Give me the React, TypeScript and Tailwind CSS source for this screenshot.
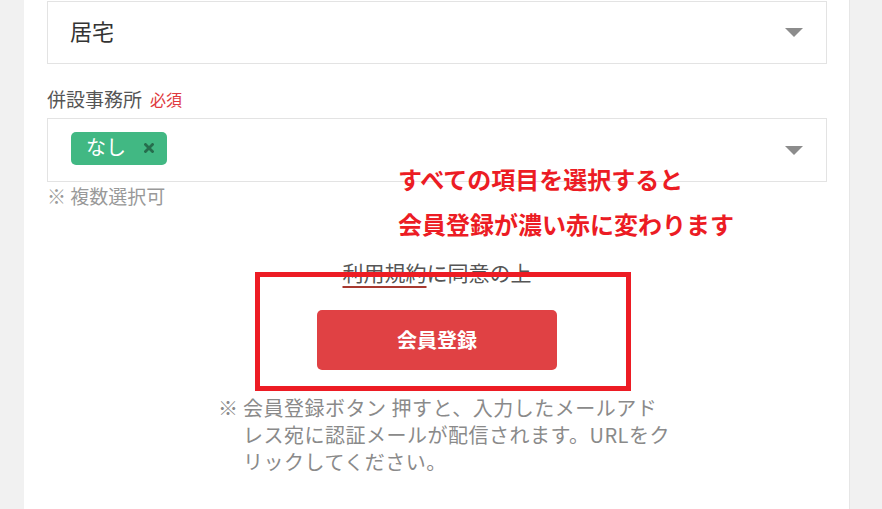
import React from "react";

const font = { fontFamily: '"Noto Sans CJK JP", "Noto Sans", sans-serif' };

function Caret() {
  return (
    <svg width="18" height="9" viewBox="0 0 18 9" className="shrink-0">
      <polygon points="0,0 18,0 9,9" fill="#8c8c8c" />
    </svg>
  );
}

export default function App() {
  return (
    <div className="flex w-[882px] h-[509px] bg-[#f1f1f1] overflow-hidden" style={font}>
      <div className="w-[24px] shrink-0" />

      {/* form panel */}
      <div className="relative w-[825px] shrink-0 bg-white px-[23px] pt-px pr-[22px]">
        {/* select: 居宅 */}
        <div className="flex items-center justify-between h-[63px] border border-[#e3e3e3] pl-[22px] pr-[23px]">
          <span className="mb-[6px] text-[22px] text-[#333] leading-none">居宅</span>
          <Caret />
        </div>

        {/* label */}
        <div className="mt-[21px] mb-[5px] h-[28px] flex items-center gap-[8px]">
          <span className="text-[19px] text-[#555]">併設事務所</span>
          <span className="text-[16px] text-[#e0393e]">必須</span>
        </div>

        {/* multi select */}
        <div className="flex items-center justify-between h-[64px] border border-[#e3e3e3] pl-[23px] pr-[23px]">
          <span className="mb-[4px] flex items-center h-[33px] w-[96px] rounded-[5px] bg-[#41b883] pl-[15px] gap-[18px]">
            <span className="mb-[3px] text-[20px] text-white leading-none">なし</span>
            <svg width="10" height="10" viewBox="0 0 10 10">
              <path d="M1.5 1.5 L8.5 8.5 M8.5 1.5 L1.5 8.5" stroke="#266d4d" strokeWidth="2.8" strokeLinecap="square" />
            </svg>
          </span>
          <Caret />
        </div>
        <p className="h-[28px] leading-[28px] text-[19px] text-[#999]">※ 複数選択可</p>

        {/* agree + submit */}
        <div className="flex flex-col items-center">
          <p className="mt-[48px] h-[28px] leading-[28px] text-[21px] text-[#555]">
            <span className="underline decoration-[#a8392f] underline-offset-[5px]">利用規約</span>に同意の上
          </p>
          <button className="mt-[24px] w-[240px] h-[60px] rounded-[5px] bg-[#e04144] text-white text-[20px] font-bold">
            会員登録
          </button>
          <div className="mt-[24px] w-[438px] flex text-[20px] leading-[27px] text-[#8a8a8a] tracking-[0.5px]">
            <span className="w-[25px] shrink-0">※</span>
            <p className="whitespace-nowrap">
              会員登録ボタン 押すと、入力したメールアド
              <br />
              レス宛に認証メールが配信されます。URLをク
              <br />
              リックしてください。
            </p>
          </div>
        </div>

        {/* annotation overlay */}
        <div className="absolute left-[374px] top-[156px] text-[24px] font-bold text-[#ec1c24] leading-[45px]">
          <p>すべての項目を選択すると</p>
          <p>会員登録が濃い赤に変わります</p>
        </div>
        <div className="absolute left-[231px] top-[272px] w-[376px] h-[119px] border-[5px] border-[#ed1c24]" />
      </div>

      <div className="flex-1 border-l border-[#e6e6e6]" />
    </div>
  );
}
